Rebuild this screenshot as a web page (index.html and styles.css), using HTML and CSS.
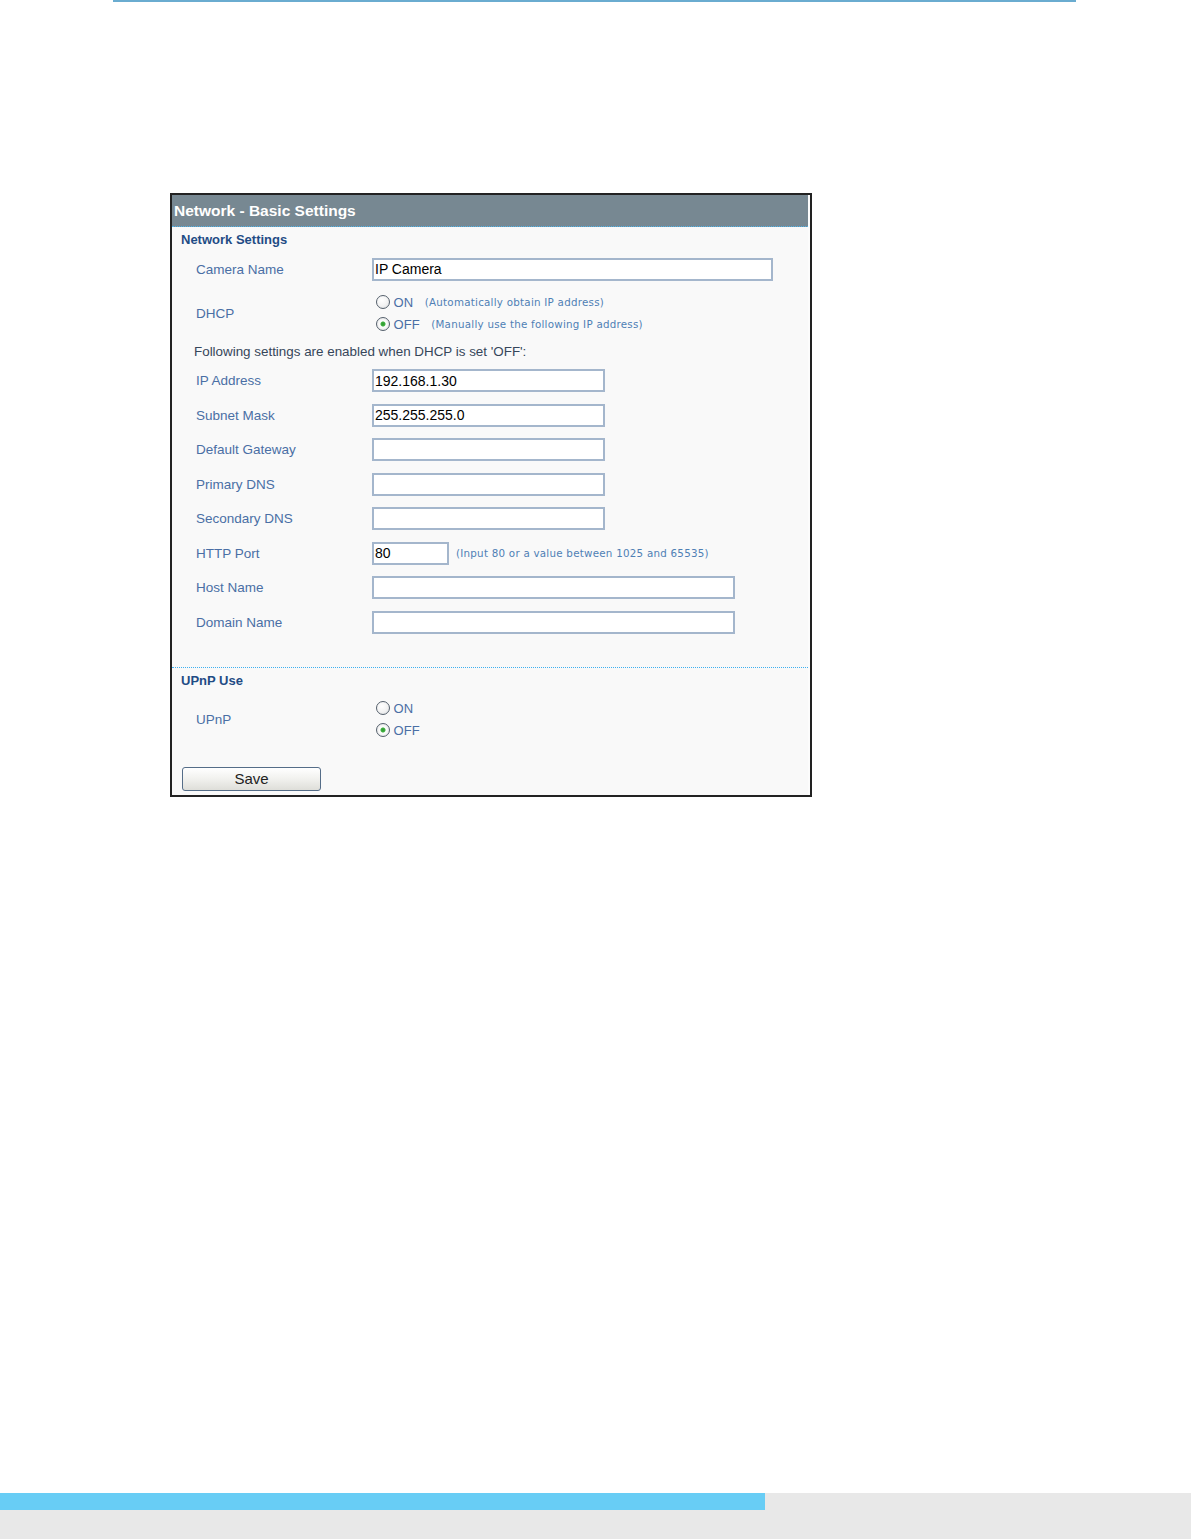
FILE: index.html
```html
<!DOCTYPE html>
<html lang="en">

<head>
    <meta charset="UTF-8">
    <title>Network - Basic Settings</title>
    <link rel="stylesheet" href="styles.css">
</head>

<body>
    <div class="page">
        <div class="top-rule"></div>

        <div class="shot">
            <div class="shot-inner">
                <div class="panel-title">Network - Basic Settings</div>

                <div class="section">
                    <div class="section-title">Network Settings</div>

                    <div class="row">
                        <label class="row-label">Camera Name</label>
                        <input type="text" class="field field-wide" value="IP Camera">
                    </div>

                    <div class="row row-radio">
                        <span class="row-label">DHCP</span>
                        <div class="radio-list">
                            <label class="radio-line"><input type="radio" name="dhcp"> ON <span class="hint">(Automatically obtain IP address)</span></label>
                            <label class="radio-line"><input type="radio" name="dhcp" checked> OFF <span class="hint">(Manually use the following IP address)</span></label>
                        </div>
                    </div>

                    <div class="note">Following settings are enabled when DHCP is set 'OFF':</div>

                    <div class="row">
                        <label class="row-label">IP Address</label>
                        <input type="text" class="field" value="192.168.1.30">
                    </div>
                    <div class="row">
                        <label class="row-label">Subnet Mask</label>
                        <input type="text" class="field" value="255.255.255.0">
                    </div>
                    <div class="row">
                        <label class="row-label">Default Gateway</label>
                        <input type="text" class="field">
                    </div>
                    <div class="row">
                        <label class="row-label">Primary DNS</label>
                        <input type="text" class="field">
                    </div>
                    <div class="row">
                        <label class="row-label">Secondary DNS</label>
                        <input type="text" class="field">
                    </div>
                    <div class="row">
                        <label class="row-label">HTTP Port</label>
                        <div class="inline">
                            <input type="text" class="field field-short" value="80">
                            <span class="hint">(Input 80 or a value between 1025 and 65535)</span>
                        </div>
                    </div>
                    <div class="row">
                        <label class="row-label">Host Name</label>
                        <input type="text" class="field field-mid">
                    </div>
                    <div class="row">
                        <label class="row-label">Domain Name</label>
                        <input type="text" class="field field-mid">
                    </div>
                </div>

                <div class="section section-last">
                    <div class="section-title">UPnP Use</div>

                    <div class="row row-radio">
                        <span class="row-label">UPnP</span>
                        <div class="radio-list">
                            <label class="radio-line"><input type="radio" name="upnp"> ON</label>
                            <label class="radio-line"><input type="radio" name="upnp" checked> OFF</label>
                        </div>
                    </div>

                    <button type="button" class="save-btn">Save</button>
                </div>
            </div>
        </div>

        <div class="footer">
            <div class="footer-bar"></div>
        </div>
    </div>
</body>

</html>
```

FILE: styles.css
```css
body {
    margin: 0;
    background-color: #fff;
    font-family: "Liberation Sans", Arial, sans-serif;
}

.page {
    min-height: 1539px;
    display: flex;
    flex-direction: column;
}

.top-rule {
    height: 2px;
    margin: 0 115px 0 113px;
    background-color: #6aacd0;
}

/* the screenshot of the camera settings page */
.shot {
    width: 636px;
    margin: 191px 0 0 170px;
    border: 2px solid #222;
    background-color: #fcfcfc;
    padding-right: 2px;
}

.shot-inner {
    background-color: #f9f9f9;
}

.panel-title {
    height: 31px;
    line-height: 31px;
    padding-left: 2px;
    background-color: #778892;
    border-bottom: 1px dotted #4fb3ea;
    color: #fff;
    font-size: 15.5px;
    font-weight: bold;
}

.section {
    padding: 0 0 27px 0;
    border-bottom: 1px dotted #3eb0f0;
}

.section-last {
    border-bottom: none;
    padding-bottom: 4px;
}

.section-title {
    height: 25px;
    line-height: 25px;
    padding-left: 9px;
    color: #1f4c85;
    font-size: 13px;
    font-weight: bold;
}

.row {
    display: grid;
    grid-template-columns: 200px 1fr;
    align-items: center;
    height: 34.5px;
}

.row-radio {
    height: 53px;
}

.row-label {
    padding-left: 24px;
    color: #4a6fa5;
    font-size: 13.5px;
}

.field {
    box-sizing: border-box;
    width: 233px;
    height: 23px;
    margin: 0;
    padding: 0 1px;
    border: 2px solid #a4b6cc;
    background-color: #fff;
    color: #000;
    font-family: "Liberation Sans", Arial, sans-serif;
    font-size: 14px;
}

.field-wide {
    width: 401px;
}

.field-mid {
    width: 363px;
}

.field-short {
    width: 77px;
}

.inline {
    display: flex;
    align-items: center;
    gap: 7px;
}

.hint {
    margin-left: 8px;
    color: #4f7fb5;
    font-family: "DejaVu Sans", Verdana, sans-serif;
    font-size: 10.3px;
    letter-spacing: 0.25px;
}

.inline .hint {
    margin-left: 0;
}

.radio-list {
    display: flex;
    flex-direction: column;
    gap: 6px;
    padding-left: 4px;
}

.radio-line {
    display: flex;
    align-items: center;
    height: 16px;
    color: #4a6fa5;
    font-size: 13px;
    white-space: pre;
}

.radio-line input {
    appearance: none;
    -webkit-appearance: none;
    box-sizing: border-box;
    width: 14px;
    height: 14px;
    margin: 0;
    border: 1px solid #55606c;
    border-radius: 50%;
    background: radial-gradient(circle at 40% 35%, #fff 0%, #f2f2f2 55%, #d4d8dc 100%);
}

.radio-line input:checked {
    background: radial-gradient(circle, #2f9a2f 0, #3fae3f 2px, #fff 3px, #f2f2f2 60%, #d4d8dc 100%);
}

.note {
    height: 24px;
    line-height: 24px;
    padding-left: 22px;
    color: #36465a;
    font-size: 13.4px;
}

.save-btn {
    width: 139px;
    height: 24px;
    margin: 21px 0 0 10px;
    padding: 0;
    border: 1px solid #556d88;
    border-radius: 3px;
    background: linear-gradient(#ffffff, #f1f1ee 50%, #deded9);
    color: #222;
    font-family: "Liberation Sans", Arial, sans-serif;
    font-size: 15px;
    cursor: pointer;
}

.footer {
    margin-top: auto;
    height: 46px;
    background-color: #e8e8e8;
}

.footer-bar {
    width: 765px;
    height: 17px;
    background-color: #68cdf5;
}
```
